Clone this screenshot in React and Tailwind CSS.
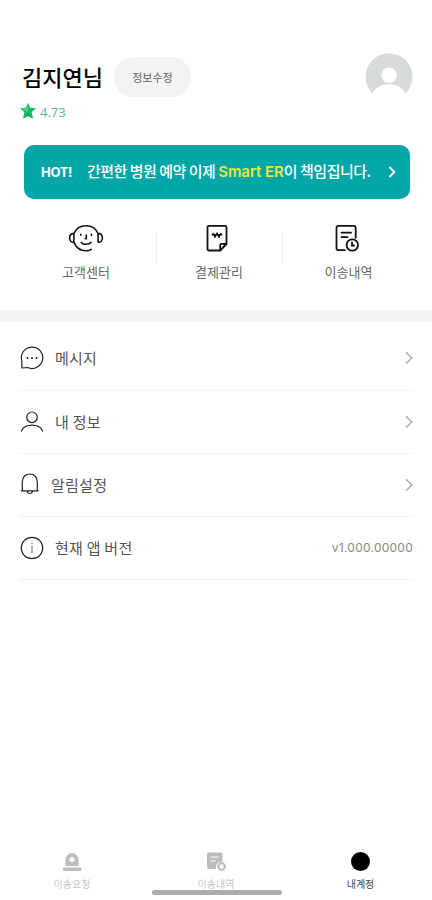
import React from "react";

const Chevron = ({ className }) => (
  <svg className={className} viewBox="0 0 8 14" fill="none" stroke="currentColor">
    <path d="M1 1.2 6.8 7 1 12.8" />
  </svg>
);

const HeadsetIcon = () => (
  <svg className="h-7 w-9" viewBox="0 0 36 28" fill="none" stroke="#111" strokeWidth="1.6" strokeLinecap="round">
    <path d="M6.2 9C8 4.500 12.500 1.700 18 1.700s10 2.800 11.800 7.300" />
    <path d="M6.200 18.800C8.300 23.500 12.500 26.700 18 26.700c2.200 0 4-.4 5.200-1.400" />
    <path d="M5.900 9.800v8.200c-2.200.7-4.300-.7-4.300-4.100s2.100-4.800 4.300-4.100zM30.100 9.800v8.200c2.200.7 4.300-.7 4.300-4.100s-2.100-4.800-4.300-4.100z" />
    <path d="M12.800 10.300v.9M23.500 10.300v.9M18.300 11v3.700h-1M13.300 18.300c1.400 2.400 7.800 2.800 9.800 0" />
  </svg>
);

const BillIcon = () => (
  <svg className="mr-1 h-7 w-6" viewBox="0 0 24 28" fill="none" stroke="#111" strokeWidth="1.800" strokeLinejoin="round">
    <path d="M4 1.800h16a1.500 1.500 0 0 1 1.500 1.500V19.800l-6.300 6.700H4a1.500 1.500 0 0 1-1.500-1.500V3.300A1.500 1.500 0 0 1 4 1.800z" />
    <path d="M15.200 26.500v-5.300a1.400 1.400 0 0 1 1.400-1.400h4.900z" />
    <path d="m8 9 2 4.300 2-4.300 2 4.300L16 9M6.600 10.800h10.800" strokeWidth="1.400" />
  </svg>
);

const HistoryIcon = () => (
  <svg className="mr-1 h-7 w-6" viewBox="0 0 24 28" fill="none" stroke="#111" strokeWidth="1.800" strokeLinecap="round">
    <path d="M10 26.200H3.500A2 2 0 0 1 1.500 24.200V3.800a2 2 0 0 1 2-2h15.200a2 2 0 0 1 2 2v10" />
    <path d="M6.500 8.700h9.500M6.500 13.200h6" />
    <circle cx="17.300" cy="21" r="5.700" />
    <path d="M17 18.300v3.200h2" />
  </svg>
);

const MessageIcon = () => (
  <svg className="h-6 w-6" viewBox="0 0 24 24" fill="none" stroke="#222" strokeWidth="1.200">
    <path d="M1.900 22V15.100A10.700 10.700 0 1 1 7.600 21.500z" strokeLinejoin="round" />
    <g fill="#222" stroke="none">
      <circle cx="7.500" cy="12" r="1" />
      <circle cx="12" cy="12" r="1" />
      <circle cx="16.500" cy="12" r="1" />
    </g>
  </svg>
);

const PersonIcon = () => (
  <svg className="h-6 w-6" viewBox="0 0 24 24" fill="none" stroke="#222" strokeWidth="1.200" strokeLinecap="round">
    <circle cx="12" cy="7.300" r="5.300" />
    <path d="M1.300 21C3.200 17.100 7.200 15.200 12 15.200s8.800 1.900 10.700 5.800" />
  </svg>
);

const BellIcon = () => (
  <svg className="h-6 w-5" viewBox="0 0 20 24" fill="none" stroke="#222" strokeWidth="1.200" strokeLinejoin="round">
    <path d="M2.300 17.700V9c0-4.700 3-8 7.500-8s7.500 3.300 7.500 8v8.700M1 17.800h17.600M7 18c.5 3.300 5.100 3.300 5.600 0" />
  </svg>
);

const InfoIcon = () => (
  <svg className="h-6 w-6" viewBox="0 0 24 24" fill="none" stroke="#222" strokeWidth="1.200">
    <circle cx="12" cy="12" r="10.700" />
    <path d="M12 10v7M12 6.500v1.600" stroke="#777" />
  </svg>
);

const shortcuts = [
  { label: "고객센터", icon: <HeadsetIcon />, width: "w-[140px]" },
  { label: "결제관리", icon: <BillIcon />, width: "w-[124px] mr-px" },
  { label: "이송내역", icon: <HistoryIcon />, width: "w-[131px]" },
];

const rows = [
  { label: "메시지", icon: <MessageIcon /> },
  { label: "내 정보", icon: <PersonIcon /> },
  { label: "알림설정", icon: <BellIcon /> },
  { label: "현재 앱 버전", icon: <InfoIcon />, value: "v1.000.00000" },
];

export default function App() {
  return (
    <div className="flex h-[900px] w-[432px] flex-col overflow-hidden bg-white font-['Noto_Sans_CJK_KR',sans-serif]">
      <header className="flex h-[145px] justify-between pt-[53px] pr-[19px] pl-5">
        <div>
          <div className="flex h-12 items-center">
            <h1 className="w-[94px] pb-[3px] pl-0.5 text-[22px] leading-8 font-medium whitespace-nowrap text-black">김지연님</h1>
            <button className="h-10 w-[77px] rounded-full bg-[#f1f3f4] pb-px text-[11px] leading-4 text-[#666]">정보수정</button>
          </div>
          <div className="mt-0.5 flex h-4 items-center gap-1">
            <svg className="h-4 w-4" viewBox="0 0 16 16">
              <path d="m8 0 2.300 4.800 5.700.5-4.300 4 1.300 6.200-5-2.500-5 2.500 1.300-6.200-4.300-4 5.700-.5z" fill="#20bd69" />
              <path d="M8 0 5.700 4.800 0 5.300 8 9z" fill="#48cf84" />
              <path d="m8 9 5 6.500-5-2.500-5 2.500z" fill="#15a557" />
            </svg>
            <span className="pt-px font-['Open_Sans',sans-serif] text-[13px] leading-4 text-[#5ab0ac]">4.73</span>
          </div>
        </div>
        <svg className="h-12 w-12" viewBox="0 0 48 48">
          <path d="M7.500 40.500A23.500 23.500 0 1 1 40.500 40.500C37.500 34.500 31.500 31.300 24 31.300S10.500 34.500 7.500 40.500z" fill="#d7dbdc" />
          <circle cx="24" cy="22.200" r="7.800" fill="#fff" />
        </svg>
      </header>

      <section className="mr-[22px] ml-6 flex h-[54px] shrink-0 items-center rounded-[10px] bg-[#03a6a6] pr-[14px] pl-[17px] pb-px whitespace-nowrap text-white">
        <b className="w-[46px] font-['Inter',sans-serif] text-[13px] leading-5 font-bold tracking-[-0.3px]">HOT!</b>
        <p className="flex-1 text-[15px] leading-6 font-medium tracking-[-0.5px]">
          간편한 병원 예약 이제 <span className="font-['Inter',sans-serif] text-[15px] font-semibold tracking-[-0.05px] text-[#e8e83d]">Smart ER</span>이 책임집니다.
        </p>
        <Chevron className="h-3 w-2 stroke-[2.2]" />
      </section>

      <section className="flex h-[111px] shrink-0 pt-[25px] pl-4">
        {shortcuts.map((s, i) => (
          <React.Fragment key={s.label}>
            {i > 0 && <div className="mt-2 h-8 w-px bg-[#f1f3f3]" />}
            <div className={`flex flex-col items-center ${s.width}`}>
              {s.icon}
              <span className="mt-2.5 text-[13px] leading-5 text-[#666]">{s.label}</span>
            </div>
          </React.Fragment>
        ))}
      </section>
      <div className="h-3 shrink-0 bg-[#f2f4f4]" />

      <main className="mr-[19px] ml-5 pt-[5px]">
        {rows.map((r) => (
          <div key={r.label} className="flex h-[63px] items-center justify-between border-b border-[#f3f3f3] first:h-16 first:pb-px">
            <div className="flex items-center gap-[11px]">
              {r.icon}
              <span className="text-[15px] leading-6 tracking-[0.25px] text-[#555]">{r.label}</span>
            </div>
            {r.value ? (
              <span className="font-['Inter',sans-serif] text-[12px] leading-5 tracking-[0.25px] text-[#888]">{r.value}</span>
            ) : (
              <Chevron className="h-3.5 w-2 stroke-[1.4] text-[#aaa]" />
            )}
          </div>
        ))}
      </main>

      <nav className="relative mt-auto grid h-[50px] grid-cols-3 text-[10px] leading-4 text-[#c8c8c8]">
        <div className="flex flex-col items-center">
          <svg className="h-6 w-6" viewBox="0 0 24 24">
            <path d="M5.500 16V9.500a6.500 6.500 0 0 1 13 0V16z" fill="#bdbdbd" />
            <circle cx="12" cy="9.500" r="2.600" fill="#fff" />
            <rect x="3" y="17.500" width="18.500" height="3.500" rx="1" fill="#bdbdbd" />
          </svg>
          <span className="mt-0.5">이송요청</span>
        </div>
        <div className="flex flex-col items-center">
          <svg className="h-6 w-6" viewBox="0 0 24 24">
            <path d="M4.500 2.500h12a2 2 0 0 1 2 2v7c-5 0-7 3-6.500 7.500H4.500a1.500 1.500 0 0 1-1.500-1.500V4a1.500 1.500 0 0 1 1.500-1.500z" fill="#bdbdbd" />
            <path d="M6.500 7h8M6.500 11h5" stroke="#fff" strokeWidth="1.200" />
            <circle cx="17.500" cy="16.500" r="3.300" fill="#fff" stroke="#bdbdbd" strokeWidth="2.200" />
          </svg>
          <span className="mt-0.5">이송내역</span>
        </div>
        <div className="flex flex-col items-center pl-px text-[#444]">
          <div className="mt-0.5 mb-1 h-[19px] w-[19px] rounded-full bg-black" />
          <span className="mt-px">내계정</span>
        </div>
        <div className="absolute top-10 left-[152px] h-[5px] w-[130px] rounded-full bg-[#adadad]" />
      </nav>
    </div>
  );
}
